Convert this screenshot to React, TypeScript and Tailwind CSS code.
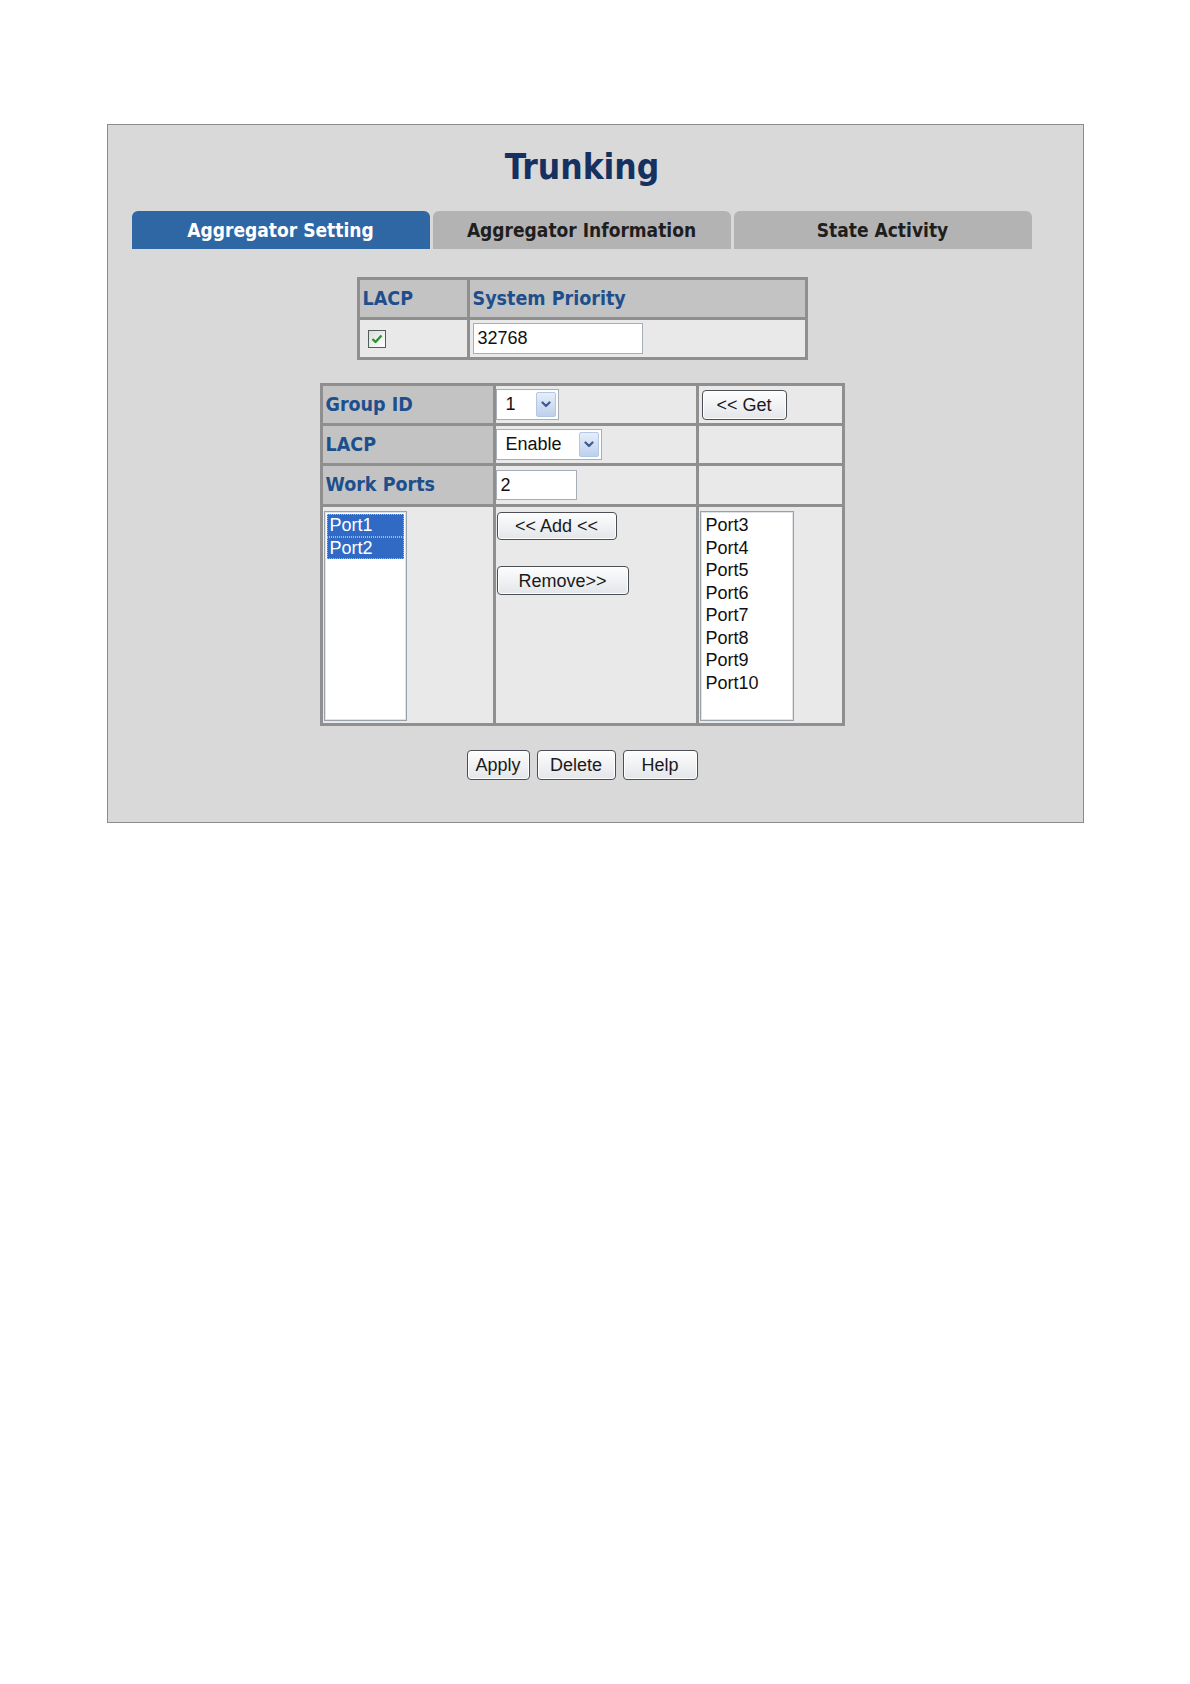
import React from "react";

const cond = "font-['DejaVu_Sans_Condensed','DejaVu_Sans',sans-serif] font-stretch-condensed font-bold";
const arial = "font-['Liberation_Sans',Arial,sans-serif]";

function Chevron() {
  return (
    <svg width="10" height="7" viewBox="0 0 10 7">
      <path d="M1.5 1.5 L5 5 L8.5 1.5" fill="none" stroke="#3f5a8e" strokeWidth="2.2" strokeLinecap="round" strokeLinejoin="round" />
    </svg>
  );
}

function Select({ value, width }: { value: string; width: string }) {
  return (
    <div className={`flex h-[31px] items-stretch border border-[#a7aeb8] bg-white p-[2px] ${width}`}>
      <span className="flex flex-1 items-center pl-[7px] text-[18px] text-[#111]">{value}</span>
      <span className="flex w-[20px] items-center justify-center rounded-[2px] border border-[#b3c8e4] bg-gradient-to-b from-[#e6eef9] to-[#bdd0ec]">
        <Chevron />
      </span>
    </div>
  );
}

function Btn({ label, width, height = "h-[30px]" }: { label: string; width: string; height?: string }) {
  return (
    <button
      className={`${arial} ${width} ${height} rounded-[4px] border border-[#4b4f55] bg-gradient-to-b from-[#fdfdfd] to-[#e3e6ea] text-[18px] leading-none text-[#1a1a1a] shadow-[inset_0_0_0_1px_#ffffff]`}
    >
      {label}
    </button>
  );
}

function Listbox({ items, selected, width }: { items: string[]; selected: number; width: string }) {
  return (
    <div className={`${width} mt-[4px] h-[210px] border border-[#9aa1aa] bg-white p-[2px] shadow-[inset_0_0_0_1px_#dfe3e8]`}>
      <div>
        {items.map((it, i) => (
          <div
            key={it}
            className={`pl-[3px] text-[18px] leading-[22.5px] ${
              i < selected ? "bg-[#316ac5] text-white outline-1 outline-dotted outline-[#9db8e6] -outline-offset-1" : "text-[#111]"
            }`}
          >
            {it}
          </div>
        ))}
      </div>
    </div>
  );
}

const label = `${cond} flex items-center bg-[#c3c3c3] pl-[3px] text-[19.5px] text-[#1d4f8d]`;
const cell = "flex items-center bg-[#e9e9e9]";

export default function App() {
  return (
    <div className={`${arial} min-h-[1684px] bg-white pt-[124px]`}>
      <div className="mx-auto w-[977px] border border-[#8c8c8c] bg-[#d9d9d9] pb-[42px] pl-[24px] pr-[50px]">
        {/* title */}
        <div className="flex h-[86px] items-center justify-center pb-[2px]">
          <h1 className={`${cond} text-[35px] leading-none text-[#163160]`}>Trunking</h1>
        </div>

        {/* tabs */}
        <div className={`${cond} flex gap-[3px] text-[19px]`}>
          <div className="flex h-[38px] w-[298px] items-center justify-center rounded-t-[6px] bg-[#2f67a5] text-white">
            Aggregator Setting
          </div>
          <div className="flex h-[38px] w-[298px] items-center justify-center rounded-t-[6px] bg-[#b3b3b3] text-[#1e1e1e]">
            Aggregator Information
          </div>
          <div className="flex h-[38px] w-[298px] items-center justify-center rounded-t-[6px] bg-[#b3b3b3] text-[#1e1e1e]">
            State Activity
          </div>
        </div>

        {/* system priority */}
        <div className="mx-auto mt-[28px] grid w-fit grid-cols-[107px_335px] grid-rows-[37px_37px] gap-[3px] bg-[#8f8f8f] p-[3px]">
          <div className={label}>LACP</div>
          <div className={label}>System Priority</div>
          <div className={`${cell} pl-[8px]`}>
            <span className="flex h-[18px] w-[18px] items-center justify-center border border-[#4f5f55] bg-gradient-to-br from-[#dcdcdc] to-[#ffffff]">
              <svg width="12" height="10" viewBox="0 0 12 10">
                <path d="M1.5 5 L4.5 8 L10.5 1.5" fill="none" stroke="#1f9a2a" strokeWidth="2.4" strokeLinejoin="round" />
              </svg>
            </span>
          </div>
          <div className={`${cell} pl-[3px]`}>
            <div className="flex h-[31px] w-[170px] items-center border border-[#a7aeb8] bg-white pl-[4px] text-[18px] text-[#111]">
              32768
            </div>
          </div>
        </div>

        {/* group settings */}
        <div className="mx-auto mt-[23px] grid w-fit grid-cols-[170px_200px_143px] grid-rows-[37px_37px_38px_216px] gap-[3px] bg-[#8f8f8f] p-[3px]">
          <div className={label}>Group ID</div>
          <div className={cell}>
            <Select value="1" width="w-[63px]" />
          </div>
          <div className={`${cell} pl-[3px]`}>
            <Btn label="<< Get" width="w-[85px]" />
          </div>

          <div className={label}>LACP</div>
          <div className={cell}>
            <Select value="Enable" width="w-[106px]" />
          </div>
          <div className={cell} />

          <div className={label}>Work Ports</div>
          <div className={cell}>
            <div className="flex h-[30px] w-[81px] items-center border border-[#a7aeb8] bg-white pl-[4px] text-[18px] text-[#111]">
              2
            </div>
          </div>
          <div className={cell} />

          <div className="bg-[#e9e9e9] pl-[1px]">
            <Listbox items={["Port1", "Port2"]} selected={2} width="w-[83px]" />
          </div>
          <div className="flex flex-col items-start gap-[26px] bg-[#e9e9e9] pl-[1px] pt-[5px]">
            <Btn label="<< Add <<" width="w-[120px]" height="h-[28px]" />
            <Btn label="Remove>>" width="w-[132px]" height="h-[29px]" />
          </div>
          <div className="bg-[#e9e9e9] pl-[1px]">
            <Listbox
              items={["Port3", "Port4", "Port5", "Port6", "Port7", "Port8", "Port9", "Port10"]}
              selected={0}
              width="w-[94px]"
            />
          </div>
        </div>

        {/* actions */}
        <div className="mt-[24px] flex justify-center gap-[7px]">
          <Btn label="Apply" width="w-[63px]" />
          <Btn label="Delete" width="w-[79px]" />
          <Btn label="Help" width="w-[75px]" />
        </div>
      </div>
    </div>
  );
}
